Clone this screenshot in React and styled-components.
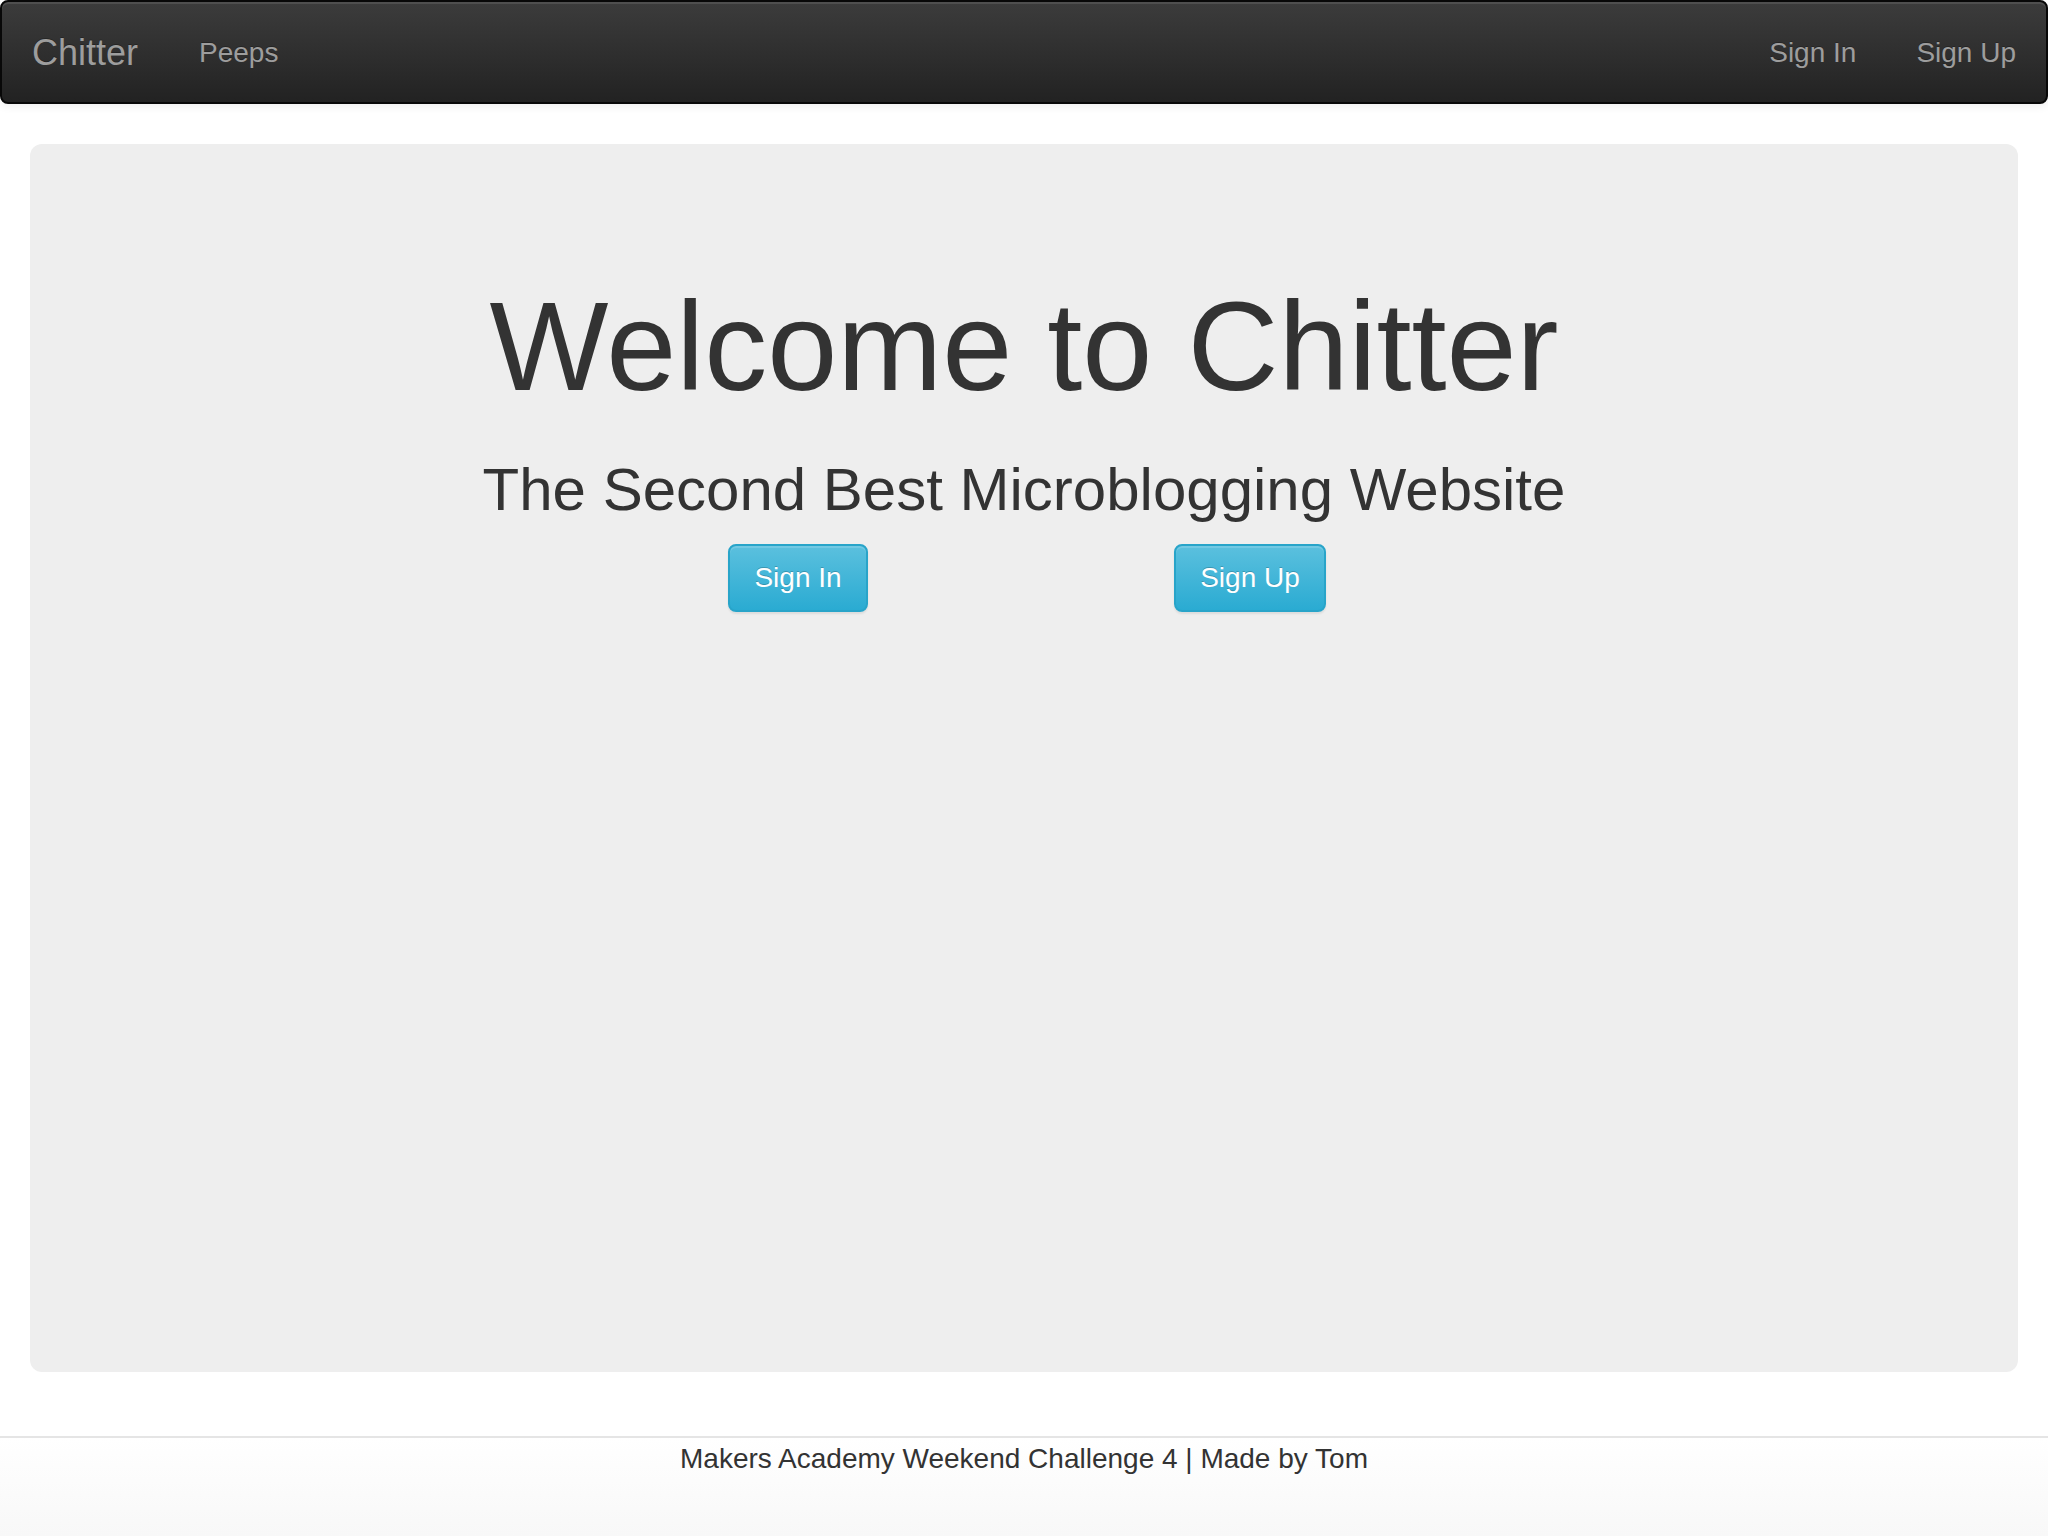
import React from 'react';
import styled, { createGlobalStyle } from 'styled-components';

const GlobalStyle = createGlobalStyle`
  html, body {
    margin: 0;
    padding: 0;
    background: #fff;
  }
  body {
    font-family: "Liberation Sans", Arial, Helvetica, sans-serif;
    color: #333;
  }
  * {
    box-sizing: border-box;
  }
`;

const Page = styled.div`
  display: flex;
  flex-direction: column;
  min-height: 1536px;
`;

const Navbar = styled.nav`
  display: flex;
  justify-content: space-between;
  align-items: flex-start;
  height: 104px;
  margin-bottom: 40px;
  border: 2px solid #080808;
  border-radius: 8px;
  background: linear-gradient(to bottom, #3c3c3c 0%, #222 100%);
  box-shadow: inset 0 2px 0 rgba(255, 255, 255, 0.1), 0 2px 10px rgba(0, 0, 0, 0.075);
`;

const NavGroup = styled.div`
  display: flex;
  align-items: flex-start;
`;

const Brand = styled.a`
  padding: 31px 31px 0 30px;
  font-size: 36px;
  line-height: 40px;
  color: #9d9d9d;
  text-decoration: none;
  text-shadow: 0 -1px 0 rgba(0, 0, 0, 0.25);
`;

const NavLink = styled.a`
  padding: 31px 30px 0;
  font-size: 28px;
  line-height: 40px;
  color: #9d9d9d;
  text-decoration: none;
  text-shadow: 0 -1px 0 rgba(0, 0, 0, 0.25);
`;

const Jumbotron = styled.section`
  height: 1228px;
  margin: 0 30px;
  padding: 96px 120px;
  border-radius: 12px;
  background: #eee;
  text-align: center;
`;

const Title = styled.h1`
  margin: 38px 0 40px;
  font-size: 126px;
  font-weight: 400;
  line-height: 1.1;
  color: #333;
`;

const Subtitle = styled.h2`
  margin: 0 0 21px;
  font-size: 60px;
  font-weight: 400;
  line-height: 1.1;
  color: #333;
`;

const ButtonRow = styled.div`
  display: grid;
  grid-template-columns: 1fr 1fr;
  width: 904px;
  margin: 0 auto;
`;

const ButtonCell = styled.div`
  display: flex;
  justify-content: center;
`;

const InfoButton = styled.a`
  display: inline-block;
  height: 68px;
  padding: 12px 24px;
  font-size: 28px;
  line-height: 40px;
  color: #fff;
  text-decoration: none;
  text-shadow: 0 -1px 0 rgba(0, 0, 0, 0.2);
  border: 2px solid #28a4c9;
  border-radius: 8px;
  background: linear-gradient(to bottom, #5bc0de 0%, #2aabd2 100%);
  box-shadow: inset 0 2px 0 rgba(255, 255, 255, 0.15), 0 2px 2px rgba(0, 0, 0, 0.075);
`;

const Footer = styled.footer`
  flex: 1;
  margin-top: 64px;
  padding-top: 1px;
  border-top: 2px solid #e5e5e5;
  background: linear-gradient(to bottom, #fff 0%, #f8f8f8 100%);
  text-align: center;
  font-size: 28px;
  line-height: 40px;
  color: #333;
`;

export default function App() {
  return (
    <Page>
      <GlobalStyle />
      <Navbar>
        <NavGroup>
          <Brand href="#">Chitter</Brand>
          <NavLink href="#">Peeps</NavLink>
        </NavGroup>
        <NavGroup>
          <NavLink href="#">Sign In</NavLink>
          <NavLink href="#">Sign Up</NavLink>
        </NavGroup>
      </Navbar>
      <Jumbotron>
        <Title>Welcome to Chitter</Title>
        <Subtitle>The Second Best Microblogging Website</Subtitle>
        <ButtonRow>
          <ButtonCell>
            <InfoButton href="#">Sign In</InfoButton>
          </ButtonCell>
          <ButtonCell>
            <InfoButton href="#">Sign Up</InfoButton>
          </ButtonCell>
        </ButtonRow>
      </Jumbotron>
      <Footer>Makers Academy Weekend Challenge 4 | Made by Tom</Footer>
    </Page>
  );
}
